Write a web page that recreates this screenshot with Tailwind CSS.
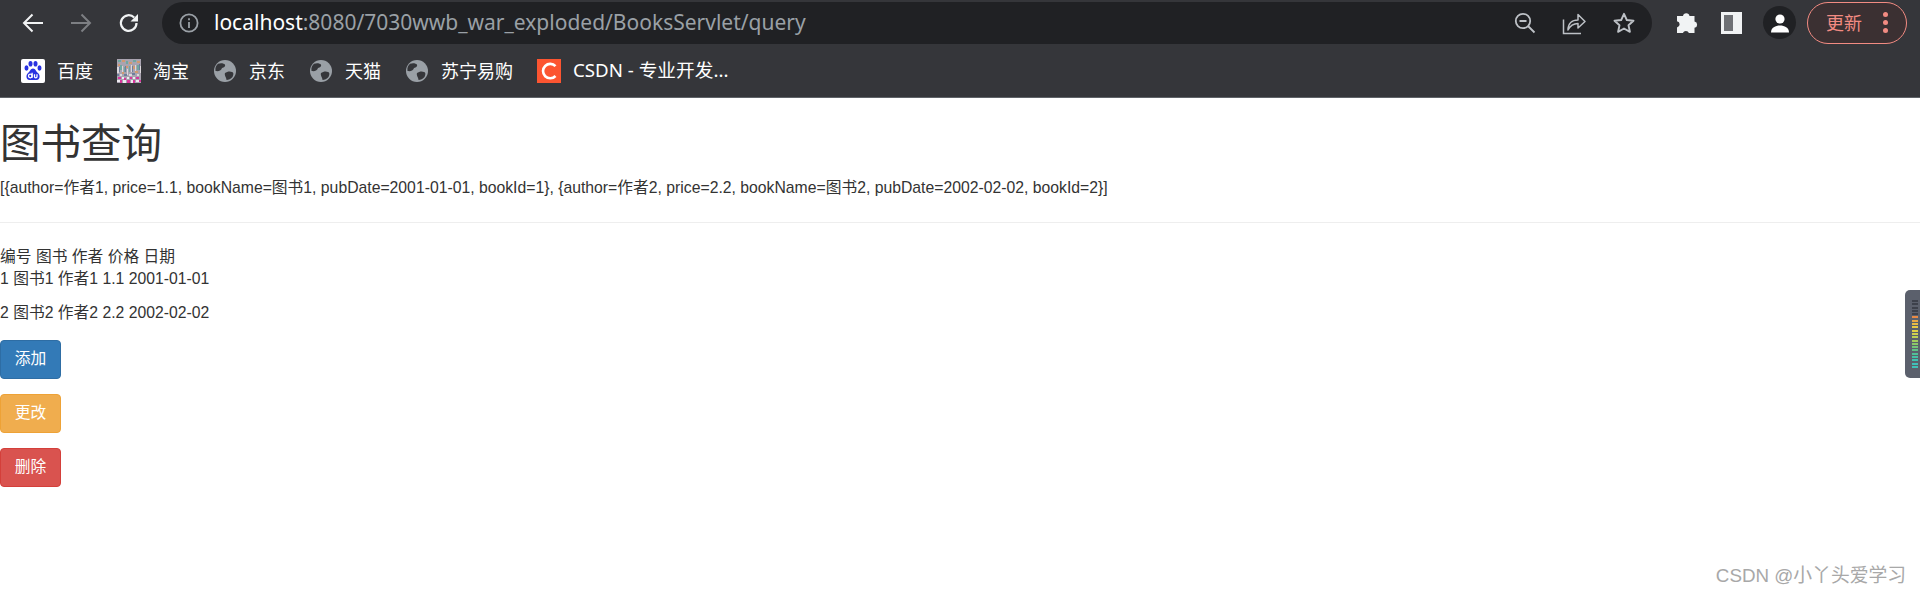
<!DOCTYPE html>
<html lang="zh">
<head>
<meta charset="UTF-8">
<title>图书查询</title>
<script src="https://cdn.jsdelivr.net/npm/@tailwindcss/browser@4"></script>
</head>
<body class="relative h-[595px] overflow-hidden bg-white font-['Liberation_Sans','Noto_Sans_CJK_SC',sans-serif] text-[#333]">
  <!-- browser toolbar -->
  <header class="h-[98px] bg-[#35363a] border-b border-[#5f6368] font-['Noto_Sans','Noto_Sans_CJK_SC',sans-serif]">
    <div class="flex h-[44px] items-center pt-[1px]">
      <div class="flex w-[162px] shrink-0 items-center pl-[21px] gap-[24px]">
        <svg class="w-[24px] h-[24px]" viewBox="0 0 24 24" fill="none" stroke="#f1f3f4" stroke-width="2"><path d="M22 12H3M11.500 3.500 3 12l8.500 8.500"/></svg>
        <svg class="w-[24px] h-[24px]" viewBox="0 0 24 24" fill="none" stroke="#7d7f83" stroke-width="2"><path d="M2 12h19M12.500 3.500 21 12l-8.500 8.500"/></svg>
        <svg class="w-[24px] h-[24px]" viewBox="0 0 24 24" fill="none" stroke="#f1f3f4" stroke-width="2.200"><path d="M19.500 12a7.800 7.800 0 1 1-2.300-5.500"/><path fill="#f1f3f4" stroke="none" d="M21 3v7.500h-7.500z"/></svg>
      </div>
      <div class="flex h-[42px] w-[1490px] shrink-0 items-center rounded-full bg-[#202124] pl-[17px] pr-[16px]">
        <svg class="w-[20px] h-[20px] shrink-0" viewBox="0 0 20 20" fill="none" stroke="#9aa0a6" stroke-width="1.800"><circle cx="10" cy="10" r="8.600"/><path d="M10 9v6M10 5.200v2"/></svg>
        <span class="ml-[15px] text-[21px] text-[#9aa0a6] whitespace-nowrap"><span class="text-white">localhost</span>:8080/7030wwb_war_exploded/BooksServlet/query</span>
        <div class="ml-auto flex items-center gap-[26px]">
          <svg class="w-[22px] h-[22px]" viewBox="0 0 22 22" fill="none" stroke="#bdc1c6" stroke-width="1.800"><circle cx="9" cy="9" r="7.200"/><path d="M5.500 9h7M14 14l6.500 6.500"/></svg>
          <svg class="w-[24px] h-[24px]" viewBox="0 0 24 24" fill="none" stroke="#bdc1c6" stroke-width="1.500"><path d="M1.500 8.500V22.500H19"/><path d="M6 19c0-6.500 4-10 10-10V3.500l7 7-7 6.500v-4.500c-4 0-7.500 1.500-10 6.500z" stroke-linejoin="round"/></svg>
          <svg class="w-[24px] h-[24px]" viewBox="0 0 24 24" fill="none" stroke="#bdc1c6" stroke-width="1.900"><path d="m12 2.800 2.800 6.200 6.700.7-5 4.500 1.400 6.600L12 17.500l-5.900 3.300 1.400-6.600-5-4.500 6.700-.7z" stroke-linejoin="round"/></svg>
        </div>
      </div>
      <div class="flex flex-1 items-center pl-[22px]">
        <svg class="w-[24px] h-[24px]" viewBox="0 0 24 24" fill="#f1f3f4"><path d="M9 5a3.300 3.300 0 0 1 6.500 0h5v5.500a3.200 3.200 0 0 1 0 6.300V22h-5.600a3.200 3.200 0 0 0-6 0H3v-5.500a3.200 3.200 0 0 0 0-6.300V5z"/></svg>
        <div class="ml-[23px] flex h-[22px] w-[21px] justify-end border-[3px] border-[#f1f3f4] bg-[#6f7175]"><div class="h-full w-[6px] bg-[#f1f3f4]"></div></div>
        <div class="ml-[21px] flex h-[33px] w-[33px] items-center justify-center rounded-full bg-[#202124]">
          <svg class="w-[22px] h-[22px]" viewBox="0 0 22 22" fill="#fff"><circle cx="11" cy="7" r="4.600"/><path d="M2 20.500c0-5 4.500-7 9-7s9 2 9 7z"/></svg>
        </div>
        <div class="ml-[11px] flex h-[42px] w-[100px] items-center rounded-full border border-[#f28b82] bg-[#3b3032] pl-[18px] text-[18px] leading-none text-[#f28b82]">
          更新
          <div class="ml-[21px] flex flex-col gap-[3.500px]">
            <span class="block w-[4.500px] h-[4.500px] rounded-full bg-[#f28b82]"></span>
            <span class="block w-[4.500px] h-[4.500px] rounded-full bg-[#f28b82]"></span>
            <span class="block w-[4.500px] h-[4.500px] rounded-full bg-[#f28b82]"></span>
          </div>
        </div>
      </div>
    </div>
    <!-- bookmarks -->
    <nav class="flex h-[53px] items-center pl-[21px] gap-[24px] text-[18px] leading-none text-white whitespace-nowrap">
      <a class="flex items-center gap-[12px]">
        <svg class="w-[24px] h-[24px]" viewBox="0 0 24 24"><rect width="24" height="24" rx="2" fill="#fff"/><g fill="#2932e1"><ellipse cx="5.500" cy="9" rx="2" ry="2.700"/><ellipse cx="9.500" cy="4.800" rx="2" ry="2.800"/><ellipse cx="14.500" cy="4.800" rx="2" ry="2.800"/><ellipse cx="18.500" cy="9" rx="2" ry="2.700"/><path d="M12 9.500c-2.500 0-3 3-5 4.500-2.500 2-2 7 1.500 7h7c3.500 0 4-5 1.500-7-2-1.500-2.500-4.500-5-4.500z"/></g><g fill="none" stroke="#fff" stroke-width="1.300"><circle cx="9.300" cy="17" r="1.800"/><path d="M11.100 13.800V18.800M13.500 15.300v2.500c0 1.400 2.500 1.400 2.500 0v-2.500"/></g></svg>
        百度
      </a>
      <a class="flex items-center gap-[12px]">
        <svg class="w-[24px] h-[24px]" viewBox="0 0 24 24" shape-rendering="crispEdges">
          <rect width="24" height="24" fill="#a9a3b0"/>
          <path fill="#6fa8a0" d="M1 1h3v2H1zM9 2h2v3H9zM16 1h3v2h-3zM3 6h2v5H3zM12 7h1v6h-1zM20 6h2v5h-2zM7 8h1v5H7z"/>
          <path fill="#d09a70" d="M5 1h3v2H5zM12 3h3v2h-3zM20 2h3v2h-3zM1 5h2v2H1zM9 7h2v2H9zM16 7h2v3h-2zM5 13h2v2H5zM18 12h3v2h-3z"/>
          <path fill="#dcd8dc" d="M0 8h2v6H0zM5 7h1v6H5zM10 10h1v6h-1zM14 6h1v7h-1zM18 6h1v6h-1zM23 7h1v7h-1zM3 15h2v2H3zM12 15h3v2h-3zM20 15h2v2h-2z"/>
          <path fill="#6d7f9c" d="M2 8h1v5H2zM8 7h1v6H8zM15 7h1v6h-1zM22 5h1v6h-1zM7 15h3v2H7zM15 14h3v2h-3zM0 15h2v2H0z"/>
          <path fill="#d6369c" d="M1 18h3v2H1zM7 19h2v2H7zM13 18h2v2h-2zM19 18h3v2h-3zM3 21h2v3H3zM10 21h3v3h-3zM16 21h2v3h-2zM22 21h2v2h-2z"/>
          <path fill="#eeeaf0" d="M5 18h2v2H5zM10 18h2v2h-2zM16 18h2v2h-2zM0 21h3v2H0zM6 21h3v3H6zM14 21h2v3h-2zM19 21h3v2h-3z"/>
        </svg>
        淘宝
      </a>
      <a class="flex items-center gap-[12px]">
        <svg class="w-[24px] h-[24px]" viewBox="0 0 24 24"><circle cx="12" cy="12" r="11" fill="#9aa0a6"/><path fill="#35363a" d="M5 4.800c3-1 6-.5 7 1 .7 1.500-.8 3-3 3.200-.5 2.500-3 3.500-6.500 3C2 9 3 6.500 5 4.800zM12 14c2-1.500 5-2 7-1 2 .5 1.500 3 .5 5-1.500 2-4 3-6 3 .3-2-2.500-4.500-1.500-7z"/></svg>
        京东
      </a>
      <a class="flex items-center gap-[12px]">
        <svg class="w-[24px] h-[24px]" viewBox="0 0 24 24"><circle cx="12" cy="12" r="11" fill="#9aa0a6"/><path fill="#35363a" d="M5 4.800c3-1 6-.5 7 1 .7 1.500-.8 3-3 3.200-.5 2.500-3 3.500-6.500 3C2 9 3 6.500 5 4.800zM12 14c2-1.500 5-2 7-1 2 .5 1.500 3 .5 5-1.500 2-4 3-6 3 .3-2-2.500-4.500-1.500-7z"/></svg>
        天猫
      </a>
      <a class="flex items-center gap-[12px]">
        <svg class="w-[24px] h-[24px]" viewBox="0 0 24 24"><circle cx="12" cy="12" r="11" fill="#9aa0a6"/><path fill="#35363a" d="M5 4.800c3-1 6-.5 7 1 .7 1.500-.8 3-3 3.200-.5 2.500-3 3.500-6.500 3C2 9 3 6.500 5 4.800zM12 14c2-1.500 5-2 7-1 2 .5 1.500 3 .5 5-1.500 2-4 3-6 3 .3-2-2.500-4.500-1.500-7z"/></svg>
        苏宁易购
      </a>
      <a class="flex items-center gap-[12px]">
        <svg class="w-[24px] h-[24px]" viewBox="0 0 24 24"><rect width="24" height="24" fill="#fc5531"/><path d="M18.500 7.200A7.200 7.200 0 1 0 18.500 17" fill="none" stroke="#fff" stroke-width="2.600"/></svg>
        <span class="text-[18.700px]">CSDN - 专业开发...</span>
      </a>
    </nav>
  </header>

  <!-- page -->
  <main>
    <h1 class="mt-[23px] text-[40.500px] leading-[46px] font-normal">图书查询</h1>
    <p class="mt-[10px] text-[15.750px] leading-[22px]">[{author=作者1, price=1.1, bookName=图书1, pubDate=2001-01-01, bookId=1}, {author=作者2, price=2.2, bookName=图书2, pubDate=2002-02-02, bookId=2}]</p>
    <hr class="mt-[23px] border-t border-[#eeeeee]">
    <div class="mt-[23px] text-[15.750px] leading-[21px]">编号 图书 作者 价格 日期</div>
    <div class="mt-[1px] text-[15.750px] leading-[21px]">1 图书1 作者1 1.1 2001-01-01</div>
    <div class="mt-[13px] text-[15.750px] leading-[21px]">2 图书2 作者2 2.2 2002-02-02</div>
    <div class="mt-[17px] flex flex-col items-start gap-[15px]">
      <button class="h-[39px] w-[61px] rounded-[4px] border border-[#2e6da4] bg-[#337ab7] pb-[2px] text-[15.750px] text-white">添加</button>
      <button class="h-[39px] w-[61px] rounded-[4px] border border-[#eea236] bg-[#f0ad4e] pb-[2px] text-[15.750px] text-white">更改</button>
      <button class="h-[39px] w-[61px] rounded-[4px] border border-[#d43f3a] bg-[#d9534f] pb-[2px] text-[15.750px] text-white">删除</button>
    </div>
  </main>

  <!-- floating widget at the window edge -->
  <div class="absolute left-[1905px] top-[290px] flex h-[88px] w-[20px] flex-col gap-[1.300px] rounded-l-[5px] bg-[#5b606c] pl-[7px] pt-[10px]">
    <span class="block h-[2px] w-[6px] bg-[#3d414b]"></span><span class="block h-[2px] w-[6px] bg-[#3d414b]"></span><span class="block h-[2px] w-[6px] bg-[#3d414b]"></span><span class="block h-[2px] w-[6px] bg-[#3d414b]"></span><span class="block h-[2px] w-[6px] bg-[#3d414b]"></span>
    <span class="block h-[2px] w-[6px] bg-[#e88a45]"></span><span class="block h-[2px] w-[6px] bg-[#e8a945]"></span><span class="block h-[2px] w-[6px] bg-[#e8bc45]"></span><span class="block h-[2px] w-[6px] bg-[#e8c945]"></span><span class="block h-[2px] w-[6px] bg-[#e0d045]"></span><span class="block h-[2px] w-[6px] bg-[#d0d050]"></span><span class="block h-[2px] w-[6px] bg-[#bcd055]"></span><span class="block h-[2px] w-[6px] bg-[#a5cc5c]"></span><span class="block h-[2px] w-[6px] bg-[#8cc868]"></span><span class="block h-[2px] w-[6px] bg-[#75c478]"></span><span class="block h-[2px] w-[6px] bg-[#60c088]"></span><span class="block h-[2px] w-[6px] bg-[#50c098]"></span><span class="block h-[2px] w-[6px] bg-[#45c0a5]"></span><span class="block h-[2px] w-[6px] bg-[#40c0b0]"></span><span class="block h-[2px] w-[6px] bg-[#40c0b8]"></span><span class="block h-[2px] w-[6px] bg-[#40c0b8]"></span>
  </div>

  <!-- watermark -->
  <div class="absolute right-[14px] top-[564px] text-[18.800px] leading-[24px] text-[#a8a8a8] whitespace-nowrap">CSDN @小丫头爱学习</div>
</body>
</html>
